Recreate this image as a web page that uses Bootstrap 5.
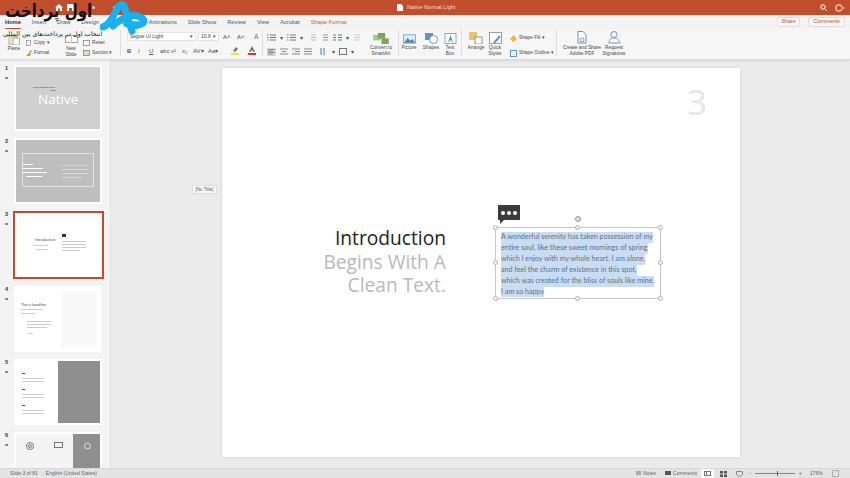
<!DOCTYPE html>
<html lang="en">
<head>
  <meta charset="UTF-8">
  <title>Native Normal Light</title>
  <link href="https://cdn.jsdelivr.net/npm/bootstrap@5.3.0/dist/css/bootstrap.min.css" rel="stylesheet">
  <style>
    html, body { width: 850px; height: 478px; overflow: hidden; }
    body { font-family: "Liberation Sans", sans-serif; font-size: 5.5px; line-height: 1; color: #444; background: #ebebeb; position: relative; }
    svg { display: block; flex: none; }

    .title-bar { height: 15px; background: #c14e2c; color: #f6dcd2; padding-right: 5px; position: relative; }
    .title-center { position: absolute; left: 397px; top: 4px; }
    .quick-icons { position: absolute; left: 55px; top: 4px; gap: 4px; }
    .quick-dot { width: 3px; height: 3px; border-radius: 50%; background: #eec4b4; }
    .quick-gap { margin-left: 14px; }

    .tab-row { height: 14px; background: #f4f4f4; padding: 5px 5px 0; gap: 11px; font-size: 5.7px; }
    .tab-row span { color: #555; }
    .tab-row .tab-on { color: #333; border-bottom: 1px solid #c14e2c; padding-bottom: 2px; font-weight: bold; }
    .tab-row .tab-shape { color: #c9563a; }
    .top-btn { position: absolute; top: 17px; height: 10px; border: 1px solid #ddd; border-radius: 2px; background: #f8f8f8; color: #c14e2c; padding: 0 3px; }
    .btn-share { left: 777px; width: 23px; }
    .btn-comments { left: 808px; width: 37px; }

    .ribbon { height: 31px; background: #f6f6f6; border-bottom: 1px solid #dcdcdc; padding-left: 6px; font-size: 4.8px; box-shadow: 0 1px 2px rgba(0,0,0,.08); position: relative; }
    .rb-col { flex-direction: column; align-items: center; text-align: center; gap: 1px; line-height: 5.5px; flex: none; }
    .rb-sep { width: 1px; height: 26px; background: #dedede; margin-top: 1px; flex: none; }
    .rb-small { flex-direction: column; gap: 4px; padding-top: 11px; flex: none; }
    .rb-small > div { display: flex; align-items: center; gap: 2px; }
    .rb-paste { width: 16px; padding-top: 7px; }
    .rb-clip { width: 34px; margin-left: 4px; }
    .rb-new { width: 20px; margin-left: 1px; padding-top: 6px; gap: 3px; }
    .rb-slide { width: 36px; margin-left: 2px; }
    .sep-font { margin-left: 1px; }
    .rb-font { width: 135px; margin-left: 6px; padding-top: 3px; gap: 4px; flex: none; }
    .rb-para { width: 98px; margin-left: 4px; padding-top: 3px; gap: 3px; flex: none; }
    .rb-smart { width: 30px; margin-left: 1px; padding-top: 4px; }
    .sep-draw { margin-left: 2px; }
    .rb-pic { width: 20px; padding-top: 5px; }
    .rb-shapes { width: 22px; margin-left: 1px; padding-top: 4px; }
    .rb-text { width: 16px; padding-top: 4px; }
    .sep-arr { margin-left: 3px; }
    .rb-arrange { width: 22px; margin-left: 3px; padding-top: 3px; }
    .rb-quick { width: 16px; padding-top: 3px; }
    .rb-fill { width: 46px; margin-left: 7px; padding-top: 6px; }
    .rb-create { width: 38px; margin-left: 6px; padding-top: 2px; }
    .rb-sign { width: 26px; padding-top: 2px; }

    .font-pick { width: 69px; height: 9px; background: #fff; border: 1px solid #e4e4e4; padding: 0 2px; justify-content: space-between; font-size: 5px; }
    .size-pick { width: 21px; margin-left: 2px; }
    .grow-a { font-size: 6px; margin-left: 4px; width: 10px; }
    .clear-a { font-size: 7px; margin-left: 7px; color: #777; }
    .ico-row { height: 11px; font-size: 6px; color: #555; }
    .ico-row b, .ico-row i, .ico-row u { font-size: 6px; }
    .fmt-cell { width: 11px; flex: none; }
    .fmt-wide { width: 15px; flex: none; }
    .fmt-color { margin-left: 8px; }
    .para-row { gap: 4px; }
    .para-gap { margin-left: 1px; }
    .para-wide { margin-left: 4px; }

    .work { height: 408px; }
    .slide-list { width: 111px; flex: none; background: #f3f3f3; border-right: 1px solid #e2e2e2; padding-top: 5px; gap: 7px; overflow: hidden; }
    .thumb-row { height: 66px; flex: none; position: relative; padding-left: 14px; }
    .thumb-num { position: absolute; left: 5px; top: 1px; font-size: 5.5px; color: #333; font-weight: bold; }
    .thumb-num::after { content: ""; display: block; width: 3px; height: 2px; background: #888; margin-top: 5px; }
    .thumb { width: 88px; height: 66px; background: #fff; border: 2px solid #fff; overflow: hidden; position: relative; }
    .thumb.gray1 { background: #d0d0d0; }
    .thumb.gray2 { background: #bebebe; }
    .thumb.pale { background: #f4f4f4; }
    .thumb-row.sel { height: 68px; padding-left: 13px; }
    .thumb-row.sel .thumb { width: 91px; height: 68px; border: 2px solid #c5492c; }
    .thumb-bit { position: absolute; display: block; }
    .thumb-word { position: absolute; white-space: nowrap; font-family: "Open Sans", sans-serif; }
    .word-native { left: 22px; top: 23px; font-size: 13.5px; line-height: 18px; color: #fff; }
    .word-intro { left: 20px; top: 25px; font-size: 3.5px; color: #333; }
    .word-head { left: 5px; top: 15px; font-size: 3.5px; color: #333; }
    .thumb-frame { position: absolute; left: 6px; top: 13px; width: 72px; height: 34px; border: 1px solid #e2e2e2; }
    .thumb-ico { position: absolute; top: 8px; }
    .ico-a { left: 9px; } .ico-b { left: 38px; } .ico-c { left: 67px; }

    .stage { flex: 1; padding-top: 8px; position: relative; }
    .slide-page { width: 518px; height: 389px; background: #fff; margin-left: 111px; position: relative; box-shadow: 0 0 3px rgba(0,0,0,.12); font-family: "Open Sans", sans-serif; }
    .no-title { position: absolute; left: 81px; top: 125px; width: 25px; height: 9px; background: #f8f8f8; border: 1px solid #ddd; font-size: 4.5px; text-align: center; line-height: 7px; color: #555; }
    .page-no { position: absolute; right: 33px; top: 12px; font-size: 35px; line-height: 44px; color: #e6e6e6; }
    .slide-head { position: absolute; right: 294px; top: 158px; text-align: right; font-size: 19.2px; line-height: 23.5px; color: #b9b9b9; white-space: nowrap; }
    .slide-head .dark { color: #222; }
    .talk { position: absolute; left: 276px; top: 137px; width: 22px; height: 15px; background: #3a3a3a; gap: 2px; }
    .talk i { width: 4px; height: 4px; border-radius: 50%; background: #fff; display: block; }
    .talk::after { content: ""; position: absolute; left: 2px; top: 15px; border-top: 4px solid #3a3a3a; border-right: 4px solid transparent; }
    .text-frame { position: absolute; left: 273px; top: 159px; width: 166px; height: 72px; border: 1px solid #c8c8c8; padding: 4px 5px; font-family: "Lato", sans-serif; font-size: 7.15px; line-height: 10.9px; color: #666f7c; white-space: nowrap; }
    .text-line { display: block; }
    .text-line span { background: #c8ddf3; display: inline-block; }
    .grip { position: absolute; width: 5px; height: 5px; border: 1px solid #aaa; border-radius: 50%; background: #fff; }
    .g-l { left: 271px; } .g-c { left: 353px; } .g-r { left: 436px; }
    .g-t { top: 157px; } .g-m { top: 192px; } .g-b { top: 228px; }
    .rotate { position: absolute; left: 353px; top: 148px; width: 6px; height: 6px; border: 1px solid #999; border-radius: 50%; background: #ddd; }

    .status-bar { height: 10px; background: #e3e3e3; color: #666; font-size: 5px; padding: 0 7px 0 10px; position: relative; border-top: 1px solid #d8d8d8; gap: 8px; }
    .status-right { position: absolute; left: 636px; top: 0; height: 9px; }
    .st-item { gap: 2px; }
    .st-comments { margin-left: 9px; }
    .view-on { width: 13px; height: 9px; background: #fafafa; margin-left: 4px; }
    .st-grid { margin-left: 6px; }
    .st-read { margin-left: 9px; }
    .st-zoom { margin-left: 6px; gap: 4px; }
    .zoom-line { width: 40px; height: 1px; background: #888; position: relative; }
    .zoom-line::after { content: ""; position: absolute; left: 22px; top: -2px; width: 1px; height: 5px; background: #666; }
    .st-pct { margin-left: 8px; }
    .st-fit { margin-left: 9px; }

    .brand { position: absolute; left: 0; top: 0; width: 155px; height: 42px; }
    .brand-fa { position: absolute; left: 5px; top: 2px; font-family: "DejaVu Sans", sans-serif; font-weight: bold; font-size: 15px; line-height: 18px; color: #111; white-space: nowrap; transform: scaleY(1.25); }
    .brand-sub { position: absolute; left: 3px; top: 30px; font-family: "DejaVu Sans", sans-serif; font-size: 6.4px; line-height: 8px; color: #111; white-space: nowrap; }
    .brand-mark { position: absolute; left: 100px; top: 1px; }
  </style>
</head>
<body>
  <div class="title-bar d-flex align-items-center justify-content-end gap-2">
    <div class="quick-icons d-flex align-items-center">
      <svg width="8" height="7" viewBox="0 0 8 7"><path d="M4 0l4 3.500H7V7H5V4.500H3V7H1V3.500H0z" fill="#fff"/></svg>
      <svg width="7" height="7" viewBox="0 0 7 7"><path d="M0 0h6l1 1v6H0z" fill="#fff"/><rect x="2" y="4" width="3" height="3" fill="#c14e2c"/></svg>
      <span class="quick-dot quick-gap"></span><span class="quick-dot quick-gap"></span>
    </div>
    <div class="title-center d-flex align-items-center gap-1">
      <svg width="6" height="7" viewBox="0 0 6 7"><path d="M0 0h4l2 2v5H0z" fill="#fff"/></svg>
      <span>Native Normal Light</span>
    </div>
    <svg width="7" height="7" viewBox="0 0 7 7"><circle cx="3" cy="3" r="2.200" fill="none" stroke="#fff"/><path d="M4.500 4.500L7 7" stroke="#fff"/></svg>
    <svg width="10" height="8" viewBox="0 0 10 8"><circle cx="4" cy="4" r="3.200" fill="none" stroke="#f2c9b8" stroke-width="1.200"/><path d="M8 3.500h2l-1 1.500z" fill="#f2c9b8"/></svg>
  </div>

  <div class="tab-row d-flex align-items-start">
    <span class="tab-on">Home</span><span>Insert</span><span>Draw</span><span>Design</span><span>Transitions</span><span>Animations</span><span>Slide Show</span><span>Review</span><span>View</span><span>Acrobat</span><span class="tab-shape">Shape Format</span>
  </div>
  <div class="top-btn btn-share d-flex align-items-center justify-content-center">Share</div>
  <div class="top-btn btn-comments d-flex align-items-center justify-content-center">Comments</div>

  <div class="ribbon d-flex align-items-start">
    <div class="d-flex rb-col rb-paste">
      <svg width="12" height="9" viewBox="0 0 12 9"><rect x="1" y=".5" width="8" height="8.500" fill="#f2e4c4" stroke="#b79a62" stroke-width=".7"/><rect x="5" y="2" width="6.500" height="7" fill="#fff" stroke="#8a8a8a" stroke-width=".7"/></svg>
      <span>Paste</span>
    </div>
    <div class="d-flex rb-small rb-clip">
      <div><svg width="6" height="6" viewBox="0 0 6 6"><rect x=".5" y=".5" width="4" height="5" fill="#fff" stroke="#777" stroke-width=".6"/></svg>Copy ▾</div>
      <div><svg width="6" height="6" viewBox="0 0 6 6"><path d="M0 6l3-3 2 1-1 2zM3 3l2-3 1 1-2 3z" fill="#c59a3c"/></svg>Format</div>
    </div>
    <div class="d-flex rb-col rb-new">
      <svg width="13" height="8" viewBox="0 0 13 8"><rect x=".5" y=".5" width="12" height="7" fill="#fff" stroke="#8f8f8f" stroke-width=".8"/><path d="M6.500 0v8" stroke="#ccc"/></svg>
      <span>New<br>Slide</span>
    </div>
    <div class="d-flex rb-small rb-slide">
      <div><svg width="7" height="6" viewBox="0 0 7 6"><rect x=".5" y=".5" width="6" height="5" fill="#fff" stroke="#777" stroke-width=".7"/></svg>Reset</div>
      <div><svg width="7" height="6" viewBox="0 0 7 6"><rect x=".5" y=".5" width="6" height="5" fill="#cfe3c8" stroke="#5a8a58" stroke-width=".7"/></svg>Section ▾</div>
    </div>
    <div class="rb-sep sep-font"></div>
    <div class="d-flex flex-column rb-font">
      <div class="d-flex align-items-center">
        <div class="font-pick d-flex align-items-center"><span>Segoe UI Light</span><span>▾</span></div>
        <div class="font-pick size-pick d-flex align-items-center"><span>10.8</span><span>▾</span></div>
        <span class="grow-a">A˄</span><span class="grow-a">A˅</span>
        <span class="clear-a">A</span>
      </div>
      <div class="ico-row d-flex align-items-center">
        <b class="fmt-cell">B</b><i class="fmt-cell">I</i><u class="fmt-cell">U</u><span class="fmt-cell">abc</span><span class="fmt-cell">x²</span><span class="fmt-cell">x₂</span><span class="fmt-wide">AV▾</span><span class="fmt-wide">Aa▾</span>
        <svg class="fmt-color" width="9" height="9" viewBox="0 0 9 9"><path d="M2 5l3-4 2 2-3 3z" fill="#777"/><rect y="7" width="8" height="2" fill="#f1e02c"/></svg>
        <svg class="fmt-color" width="9" height="9" viewBox="0 0 9 9"><path d="M4 0L1 6h1.500l.7-1.500h1.600L5.500 6H7z" fill="#666"/><rect y="7" width="8" height="2" fill="#d3352c"/></svg>
      </div>
    </div>
    <div class="rb-sep"></div>
    <div class="d-flex flex-column rb-para">
      <div class="ico-row para-row d-flex align-items-center">
        <svg width="9" height="7" viewBox="0 0 9 7"><path d="M3 1h6M3 3.500h6M3 6h6M0 1h1.500M0 3.500h1.500M0 6h1.500" stroke="#777"/></svg><span>▾</span>
        <svg width="9" height="7" viewBox="0 0 9 7"><path d="M3 1h6M3 3.500h6M3 6h6M0 1h1.500M0 3.500h1.500M0 6h1.500" stroke="#777"/></svg><span>▾</span>
        <svg class="para-gap" width="8" height="7" viewBox="0 0 8 7"><path d="M3 1h5M3 3.500h5M3 6h5" stroke="#bbb"/></svg>
        <svg width="8" height="7" viewBox="0 0 8 7"><path d="M3 1h5M3 3.500h5M3 6h5" stroke="#999"/></svg>
        <svg class="para-gap" width="9" height="7" viewBox="0 0 9 7"><path d="M0 1h3M0 3.500h3M0 6h3M5 1h4M5 3.500h4M5 6h4" stroke="#4a7fb5"/></svg><span>▾</span>
        <svg width="8" height="7" viewBox="0 0 8 7"><path d="M1 1h6M1 3.500h6M1 6h6" stroke="#ccc"/></svg>
      </div>
      <div class="ico-row para-row d-flex align-items-center">
        <svg width="9" height="8" viewBox="0 0 9 8"><rect width="9" height="8" fill="#d6d6d6"/><path d="M1 1.500h7M1 3h5M1 4.500h7M1 6h5" stroke="#777" stroke-width=".7"/></svg>
        <svg width="8" height="7" viewBox="0 0 8 7"><path d="M0 1h8M1.500 3.500h5M0 6h8" stroke="#888"/></svg>
        <svg width="8" height="7" viewBox="0 0 8 7"><path d="M0 1h8M3 3.500h5M0 6h8" stroke="#888"/></svg>
        <svg width="8" height="7" viewBox="0 0 8 7"><path d="M0 1h8M0 3.500h8M0 6h8" stroke="#888"/></svg>
        <svg class="para-wide" width="8" height="7" viewBox="0 0 8 7"><path d="M1 0v7M4 0v7" stroke="#4a7fb5"/></svg><span>▾</span>
        <svg width="8" height="7" viewBox="0 0 8 7"><rect x=".5" y=".5" width="7" height="6" fill="none" stroke="#777"/></svg><span>▾</span>
      </div>
    </div>
    <div class="d-flex rb-col rb-smart">
      <svg width="16" height="11" viewBox="0 0 17 12"><path d="M0 2h8v6H0z" fill="#a3c585"/><path d="M5 0h8v6H5zM9 6h8v6H9z" fill="#7da55c"/></svg>
      <span>Convert to<br>SmartArt</span>
    </div>
    <div class="rb-sep sep-draw"></div>
    <div class="d-flex rb-col rb-pic">
      <svg width="13" height="10" viewBox="0 0 14 10"><rect x=".5" y=".5" width="13" height="9" fill="#dcebf7" stroke="#6d93b6" stroke-width=".8"/><path d="M1 9l4-5 3 3 2-2 3 4z" fill="#4f84b8"/></svg>
      <span>Picture</span>
    </div>
    <div class="d-flex rb-col rb-shapes">
      <svg width="13" height="11" viewBox="0 0 13 11"><rect width="8" height="7" fill="#5c95c8"/><circle cx="8.500" cy="6.500" r="4" fill="#fff" stroke="#777" stroke-width=".8"/></svg>
      <span>Shapes</span>
    </div>
    <div class="d-flex rb-col rb-text">
      <svg width="13" height="11" viewBox="0 0 12 11"><rect x=".5" y=".5" width="11" height="10" fill="#fff" stroke="#6d93b6" stroke-width=".8"/><path d="M6 2L3.500 9h1l.5-1.500h2L7.500 9h1z" fill="#5c95c8"/></svg>
      <span>Text<br>Box</span>
    </div>
    <div class="rb-sep sep-arr"></div>
    <div class="d-flex rb-col rb-arrange">
      <svg width="14" height="12" viewBox="0 0 14 12"><rect width="8" height="8" fill="#e9c46a"/><rect x="6" y="5" width="7" height="7" fill="#fff" stroke="#777" stroke-width=".8"/></svg>
      <span>Arrange</span>
    </div>
    <div class="d-flex rb-col rb-quick">
      <svg width="13" height="12" viewBox="0 0 13 12"><rect x=".5" y=".5" width="12" height="11" fill="#fff" stroke="#888" stroke-width=".8"/><path d="M5 11l6-7" stroke="#5c95c8" stroke-width="2"/></svg>
      <span>Quick<br>Styles</span>
    </div>
    <div class="d-flex rb-small rb-fill">
      <div><svg width="7" height="7" viewBox="0 0 7 7"><path d="M3.500 0L7 4l-3.500 3L0 4z" fill="#e8b93a"/></svg>Shape Fill ▾</div>
      <div class="mt-1"><svg width="7" height="7" viewBox="0 0 7 7"><rect x=".5" y=".5" width="6" height="6" fill="none" stroke="#5c95c8"/></svg>Shape Outline ▾</div>
    </div>
    <div class="rb-sep"></div>
    <div class="d-flex rb-col rb-create">
      <svg width="12" height="13" viewBox="0 0 12 13"><path d="M2 .5h5l3 3V12H2z" fill="#fff" stroke="#6d93b6"/><circle cx="6" cy="9" r="2" fill="none" stroke="#6d93b6"/></svg>
      <span>Create and Share<br>Adobe PDF</span>
    </div>
    <div class="d-flex rb-col rb-sign">
      <svg width="13" height="13" viewBox="0 0 13 13"><circle cx="6" cy="3.500" r="3" fill="#fff" stroke="#6d93b6"/><path d="M1 12c0-4 2-5 5-5s4 1 6 5z" fill="#fff" stroke="#6d93b6"/></svg>
      <span>Request<br>Signatures</span>
    </div>
  </div>

  <div class="work d-flex">
    <div class="slide-list d-flex flex-column">
      <div class="thumb-row"><span class="thumb-num">1</span>
        <div class="thumb gray1" data-bits="17,20,22,1,#999;34,23,6,1,#999"><span class="thumb-word word-native">Native</span></div>
      </div>
      <div class="thumb-row"><span class="thumb-num">2</span>
        <div class="thumb gray2" data-bits="7,24,10,1,#fff;7,28,20,1,#fff;7,32,24,1,#fff;10,36,16,1,#fff;46,25,26,1,#d8d8d8;46,29,26,1,#d8d8d8;46,33,26,1,#d8d8d8;46,37,20,1,#d8d8d8"><div class="thumb-frame"></div></div>
      </div>
      <div class="thumb-row sel"><span class="thumb-num">3</span>
        <div class="thumb" data-bits="18,32,15,1,#ccc;21,36,12,1,#ccc;47,21,4,3,#333;47,28,24,1,#ccc;47,31,24,1,#ccc;47,34,24,1,#ccc;47,37,18,1,#ccc"><span class="thumb-word word-intro">Introduction</span></div>
      </div>
      <div class="thumb-row"><span class="thumb-num">4</span>
        <div class="thumb" data-bits="45,3,36,57,#f9f9f9;5,21,22,1,#ccc;5,25,14,1,#ccc;11,33,24,1,#ccc;11,36,24,1,#ccc;11,39,20,1,#ccc;11,45,6,1,#ccc"><span class="thumb-word word-head">This is headline</span></div>
      </div>
      <div class="thumb-row"><span class="thumb-num">5</span>
        <div class="thumb" data-bits="42,-2,46,70,#8f8f8f;6,12,3,1,#555;6,17,22,1,#ccc;6,20,22,1,#ccc;6,28,3,1,#555;6,33,22,1,#ccc;6,36,22,1,#ccc;6,44,3,1,#555;6,49,22,1,#ccc;6,52,22,1,#ccc;47,26,16,1,#fff;47,30,18,1,#fff;47,34,14,1,#fff"></div>
      </div>
      <div class="thumb-row"><span class="thumb-num">6</span>
        <div class="thumb pale" data-bits="57,-2,31,70,#8f8f8f">
          <svg class="thumb-ico ico-a" width="10" height="8" viewBox="0 0 10 8"><circle cx="5" cy="4" r="3.500" fill="none" stroke="#777"/><circle cx="5" cy="4" r="1.500" fill="none" stroke="#777"/></svg>
          <svg class="thumb-ico ico-b" width="9" height="7" viewBox="0 0 9 7"><rect x=".5" y=".5" width="8" height="5" fill="none" stroke="#777"/></svg>
          <svg class="thumb-ico ico-c" width="9" height="8" viewBox="0 0 9 8"><circle cx="4.500" cy="4" r="3" fill="none" stroke="#ddd"/></svg>
        </div>
      </div>
    </div>

    <div class="stage">
      <div class="slide-page">
        <div class="page-no">3</div>
        <div class="slide-head"><div class="dark">Introduction</div><div>Begins With A</div><div>Clean Text.</div></div>
        <div class="talk d-flex align-items-center justify-content-center"><i></i><i></i><i></i></div>
        <div class="rotate"></div>
        <div class="text-frame">
          <div class="text-line"><span>A wonderful serenity has taken possession of my</span></div>
          <div class="text-line"><span>entire soul, like these sweet mornings of spring</span></div>
          <div class="text-line"><span>which I enjoy with my whole heart. I am alone,</span></div>
          <div class="text-line"><span>and feel the charm of existence in this spot,</span></div>
          <div class="text-line"><span>which was created for the bliss of souls like mine.</span></div>
          <div class="text-line"><span>I am so happy</span></div>
        </div>
        <i class="grip g-l g-t"></i><i class="grip g-c g-t"></i><i class="grip g-r g-t"></i>
        <i class="grip g-l g-m"></i><i class="grip g-r g-m"></i>
        <i class="grip g-l g-b"></i><i class="grip g-c g-b"></i><i class="grip g-r g-b"></i>
      </div>
      <div class="no-title">[No Title]</div>
    </div>
  </div>

  <div class="status-bar d-flex align-items-center">
    <span>Slide 3 of 81</span><span>English (United States)</span>
    <div class="status-right d-flex align-items-center">
      <span class="st-item d-flex align-items-center"><svg width="5" height="5" viewBox="0 0 5 5"><path d="M0 1h5M0 3h5" stroke="#777"/></svg>Notes</span>
      <span class="st-item st-comments d-flex align-items-center"><svg width="6" height="5" viewBox="0 0 6 5"><rect width="6" height="4" fill="#555"/></svg>Comments</span>
      <div class="view-on d-flex align-items-center justify-content-center"><svg width="7" height="5" viewBox="0 0 7 5"><rect x=".5" y=".5" width="6" height="4" fill="none" stroke="#777"/><path d="M2.500 0v5" stroke="#777"/></svg></div>
      <svg class="st-grid" width="7" height="6" viewBox="0 0 7 6"><path d="M0 0h3v2.500H0zM4 0h3v2.500H4zM0 3.500h3V6H0zM4 3.500h3V6H4z" fill="#555"/></svg>
      <svg class="st-read" width="7" height="6" viewBox="0 0 7 6"><path d="M.5.500h6v3L3.500 6 .5 3.500z" fill="none" stroke="#888"/></svg>
      <div class="st-zoom d-flex align-items-center"><span>-</span><div class="zoom-line"></div><span>+</span></div>
      <span class="st-pct">176%</span>
      <svg class="st-fit" width="7" height="7" viewBox="0 0 7 7"><rect x=".5" y=".5" width="6" height="6" fill="none" stroke="#999" stroke-dasharray="2 1"/></svg>
    </div>
  </div>

  <div class="brand">
    <div class="brand-fa" dir="rtl">اول پرداخت</div>
    <div class="brand-sub" dir="rtl">انتخاب اول در پرداخت‌های بین المللی</div>
    <svg class="brand-mark" width="52" height="36" viewBox="0 0 52 36">
      <path d="M3 26C11 24 15 10 19 5c2-2 4-2 5 0l8 25" fill="none" stroke="#18b0ee" stroke-width="7" stroke-linecap="round"/>
      <path d="M13 25c8-8 19-13 27-9 6 3 5 7-2 8-4 1-8 0-11-1" fill="none" stroke="#18b0ee" stroke-width="7" stroke-linecap="round"/>
    </svg>
  </div>

  <script>
    // thumbnail placeholder lines: left,top,width,height,colour
    document.querySelectorAll(".thumb[data-bits]").forEach(thumb => {
      thumb.dataset.bits.split(";").forEach(bit => {
        const [left, top, width, height, colour] = bit.split(",");
        const el = document.createElement("i");
        el.className = "thumb-bit";
        el.style.left = left + "px";
        el.style.top = top + "px";
        el.style.width = width + "px";
        el.style.height = height + "px";
        el.style.background = colour;
        thumb.prepend(el);
      });
    });
  </script>
</body>
</html>
